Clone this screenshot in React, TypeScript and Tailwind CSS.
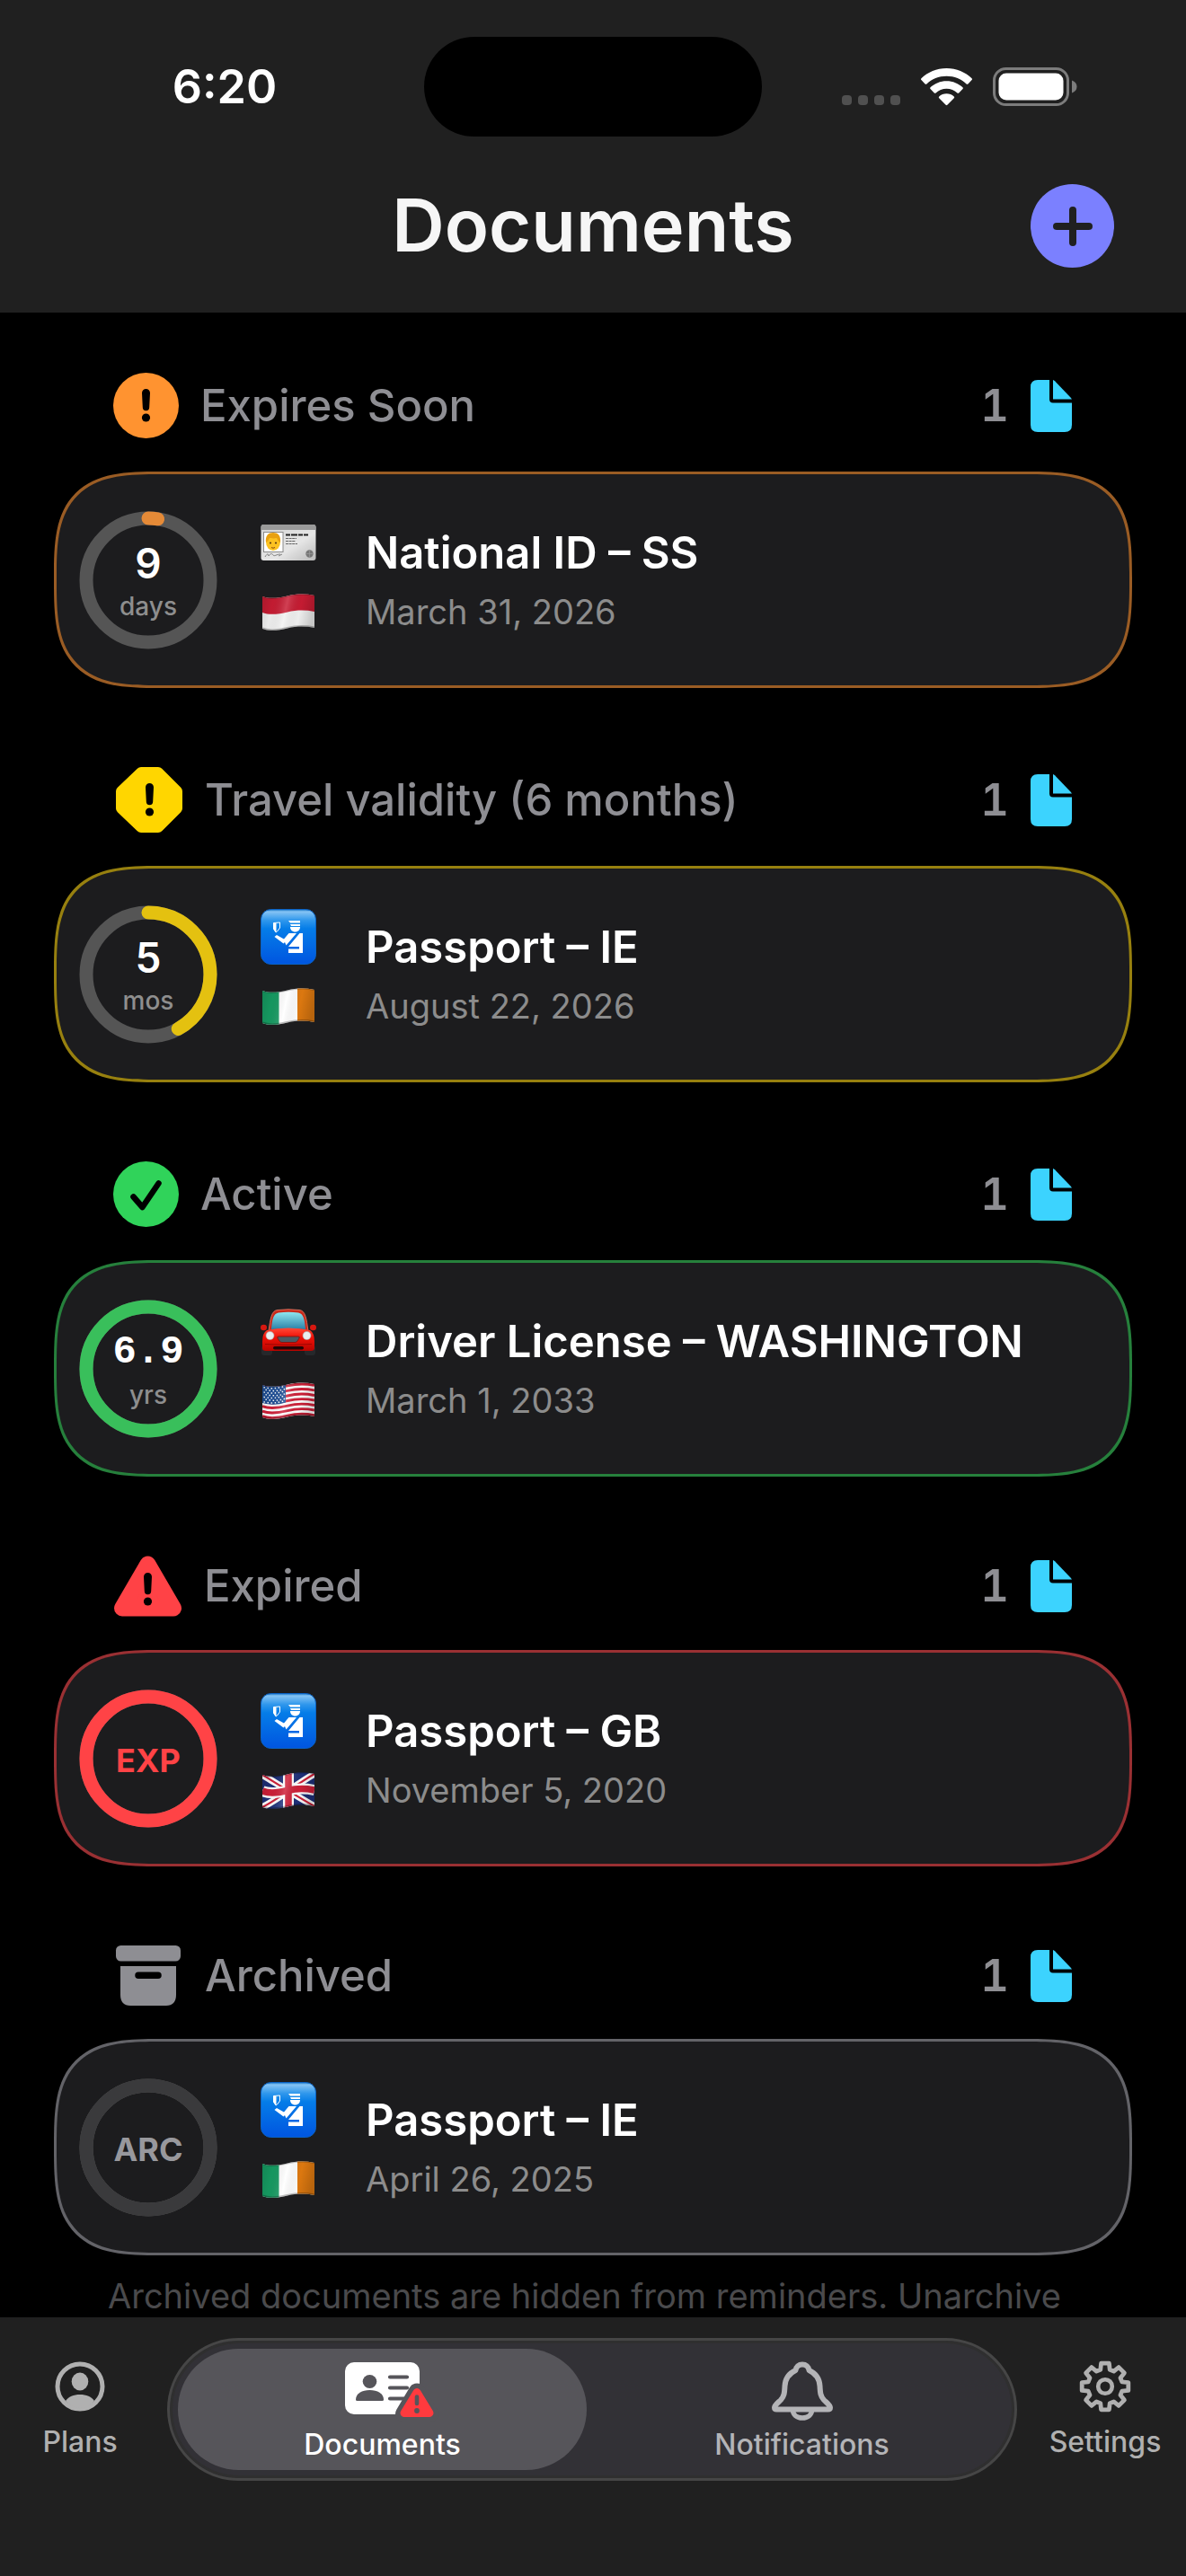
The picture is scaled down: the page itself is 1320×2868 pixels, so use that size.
import { useId, type ReactNode } from "react";

type Tone = "orange" | "yellow" | "green" | "red" | "gray";

type DocumentItem = {
  title: string;
  date: string;
  value: string;
  unit?: string;
  progress: number;
  kind: ReactNode;
  flag: ReactNode;
};

type Section = {
  name: string;
  tone: Tone;
  icon: ReactNode;
  count: number;
  item: DocumentItem;
  note?: string;
};

const borderTone: Record<Tone, string> = {
  orange: "border-[#9a5c24]",
  yellow: "border-[#97800f]",
  green: "border-[#26803c]",
  red: "border-[#9a3033]",
  gray: "border-[#636368]",
};

const arcTone: Record<Tone, string> = {
  orange: "stroke-[#e58a37]",
  yellow: "stroke-[#e4c110]",
  green: "stroke-[#39bf5b]",
  red: "stroke-[#ff4346]",
  gray: "stroke-[#3a3a3c]",
};

const badgeTone: Record<Tone, string> = {
  orange: "text-white",
  yellow: "text-white",
  green: "text-white",
  red: "text-[#ff4346]",
  gray: "text-[#98989d]",
};

/* ---------- Section icons ---------- */

function ExclaimMark({ cx, top, fill = "#000" }: { cx: number; top: number; fill?: string }) {
  return (
    <g fill={fill}>
      <path d={`M${cx - 4.5} ${top + 4.5}a4.5 4.5 0 0 1 9 0l-.8 16a3.7 3.7 0 0 1-7.4 0z`} />
      <circle cx={cx} cy={top + 32} r="4.6" />
    </g>
  );
}

function CircleAlertIcon() {
  return (
    <svg width="73" height="73" viewBox="0 0 73 73" aria-hidden="true">
      <circle cx="36.5" cy="36.5" r="36.5" fill="#ff9330" />
      <ExclaimMark cx={36.5} top={18} />
    </svg>
  );
}

function OctagonAlertIcon() {
  return (
    <svg width="78" height="73" viewBox="0 0 78 73" aria-hidden="true">
      <path
        d="M31 6h19L71 27v19L50 67H31L9 46V27z"
        fill="#ffd600"
        stroke="#ffd600"
        strokeWidth="12"
        strokeLinejoin="round"
      />
      <ExclaimMark cx={40.5} top={18} />
    </svg>
  );
}

function CheckCircleIcon() {
  return (
    <svg width="73" height="73" viewBox="0 0 73 73" aria-hidden="true">
      <circle cx="36.5" cy="36.5" r="36.5" fill="#30d35a" />
      <path
        d="M22.5 39.5L32.5 51 50.5 24.5"
        fill="none"
        stroke="#000"
        strokeWidth="6.5"
        strokeLinecap="round"
        strokeLinejoin="round"
      />
    </svg>
  );
}

function TriangleAlertIcon() {
  return (
    <svg width="77" height="68" viewBox="0 0 77 68" aria-hidden="true">
      <path
        d="M38.5 9.5L67 58.5H10z"
        fill="#ff4246"
        stroke="#ff4246"
        strokeWidth="18"
        strokeLinejoin="round"
      />
      <ExclaimMark cx={38.5} top={19} />
    </svg>
  );
}

function ArchiveIcon() {
  return (
    <svg width="78" height="67" viewBox="0 0 78 67" aria-hidden="true" fill="#8e8e93">
      <rect x="3" y="0" width="72" height="17.5" rx="5.5" />
      <path
        fillRule="evenodd"
        d="M8 23h62v32c0 8-4 12-11 12H19C12 67 8 63 8 55zM28 29.5a3.5 3.5 0 0 0 0 7.5h22a3.5 3.5 0 0 0 0-7.5z"
      />
    </svg>
  );
}

function FileIcon() {
  return (
    <svg width="46" height="58" viewBox="0 0 46 58" aria-hidden="true" fill="#3cd3fe">
      <path d="M8 0h13v21.500q0 4 4 4H46V50q0 8-8 8H8q-8 0-8-8V8q0-8 8-8z" />
      <path d="M25 0q1 .2 2 1.200L44.500 19.500q1.200 1.300 1.500 2H25z" />
    </svg>
  );
}

/* ---------- Document kind pictures ---------- */

function IdCardPicture() {
  const id = useId();
  return (
    <svg width="62" height="62" viewBox="0 0 62 62" aria-hidden="true">
      <defs>
        <linearGradient id={id} x1="0" y1="0" x2="1" y2="1">
          <stop offset="0" stopColor="#d4d4d4" />
          <stop offset="0.6" stopColor="#e6e6e6" />
          <stop offset="1" stopColor="#b9b9b9" />
        </linearGradient>
      </defs>
      <rect x="0.500" y="11" width="61" height="40" rx="3" fill={`url(#${id})`} />
      <path d="M.5 17v-3q0-3 3-3h55q3 0 3 3v3z" fill="#9a9a9a" />
      <rect x="3.500" y="19.500" width="21.500" height="22" fill="#fff" stroke="#8a8a8a" />
      <ellipse cx="14" cy="30.500" rx="8" ry="9.500" fill="#fcc221" />
      <path d="M6 31c-1-8 3-11 8-11s9 3 8 11c-2-1-3-3-4-5-4 1-7 0-8 0-1 2-2 4-4 5z" fill="#e8a010" />
      <circle cx="11" cy="31.500" r="1.100" fill="#5b3b10" />
      <circle cx="17" cy="31.500" r="1.100" fill="#5b3b10" />
      <path d="M12 36.500q2 1.500 4 0" stroke="#8a4a10" fill="none" />
      <path d="M28 22.500h25" stroke="#222" strokeWidth="2" strokeDasharray="5 1 7 1" />
      <path d="M28 26.500h12M28 29.500h11M28 32.500h13" stroke="#666" strokeWidth="1.200" strokeDasharray="3 .6" />
      <path d="M5 47c3-5 4-3 4-1 2-3 4-3 5-1s4-1 8-1M20 46l4-2" stroke="#777" fill="none" strokeWidth="0.900" />
      <circle cx="54.500" cy="43.500" r="4.200" fill="#777" />
      <path d="M50.500 43.500h8M54.500 39.500v8" stroke="#999" strokeWidth="0.700" />
    </svg>
  );
}

function PassportPicture() {
  const id = useId();
  return (
    <svg width="62" height="62" viewBox="0 0 62 62" aria-hidden="true">
      <defs>
        <linearGradient id={id} x1="0" y1="0" x2="0" y2="1">
          <stop offset="0" stopColor="#0d6fc4" />
          <stop offset="0.040" stopColor="#86c4f4" />
          <stop offset="0.200" stopColor="#2f97ec" />
          <stop offset="0.350" stopColor="#057de8" />
          <stop offset="1" stopColor="#0055e0" />
        </linearGradient>
      </defs>
      <rect x="0.500" y="0.500" width="61" height="61" rx="11" fill={`url(#${id})`} stroke="#0a62c4" />
      <g fill="#fff">
        <path d="M31 13h13v2.500H33zM33 17h11v2H34z" />
        <path d="M33 20h11c0 3-2 5.500-5.500 5.500S33 23 33 20z" />
        <path d="M14.500 15.500l3 .5v10l-3-3z" />
        <path d="M14.500 15.500l7-.5v6l-3 4-1.500 1-2.500-4z" fill="none" stroke="#fff" strokeWidth="1" />
        <path d="M18 29l8 4.500 5.500-6.500H40L28.500 40.500 27 37l-1.500 1.500L15.500 31z" />
        <path d="M43.500 27H47v22H31v-4.500h12V42H31z" />
      </g>
    </svg>
  );
}

function CarPicture() {
  const id = useId();
  return (
    <svg width="62" height="62" viewBox="0 0 62 62" aria-hidden="true">
      <defs>
        <linearGradient id={`${id}g`} x1="0" y1="0" x2="0" y2="1">
          <stop offset="0" stopColor="#8ee6f0" />
          <stop offset="1" stopColor="#2a82a8" />
        </linearGradient>
        <linearGradient id={`${id}b`} x1="0" y1="0" x2="0" y2="1">
          <stop offset="0" stopColor="#ff4a38" />
          <stop offset="0.400" stopColor="#f01208" />
          <stop offset="1" stopColor="#b80400" />
        </linearGradient>
      </defs>
      <rect x="1" y="47" width="12" height="11" rx="3" fill="#26282b" />
      <rect x="49" y="47" width="12" height="11" rx="3" fill="#26282b" />
      <ellipse cx="3.500" cy="27" rx="3.500" ry="3.200" fill="#d81810" />
      <ellipse cx="58.500" cy="27" rx="3.500" ry="3.200" fill="#d81810" />
      <path d="M9 31C11 17 12 8 19 7.500q12-1.500 24 0C50 8 51 17 53 31z" fill="#c92a1c" stroke="#e8806a" strokeWidth="0.800" />
      <path d="M12 29C13 18 14 11.500 20 10.500q11-1.500 22 0C48 11.500 49 18 50 29q-19-2-38 0z" fill={`url(#${id}g)`} />
      <path d="M7 30q24-5 48 0 5 3 5 13v7q0 3-4 3H6q-4 0-4-3v-7Q2 33 7 30z" fill={`url(#${id}b)`} />
      <circle cx="10.500" cy="36" r="4.500" fill="#e9eef0" stroke="#aaa" strokeWidth="0.600" />
      <circle cx="51.500" cy="36" r="4.500" fill="#e9eef0" stroke="#aaa" strokeWidth="0.600" />
      <path d="M20 37h22q2 0 1 2l-2 3q-1 1.500-3 1.500H24q-2 0-3-1.500l-2-3q-1-2 1-2z" fill="#4a5a63" stroke="#8a1410" />
      <rect x="14" y="48" width="34" height="3.500" rx="1.700" fill="#230505" />
      <path d="M5 45.500q26 2 52 0" stroke="#8e0602" strokeWidth="0.800" fill="none" />
    </svg>
  );
}

/* ---------- Flags ---------- */

const wave = (y: number) => `M2 ${y + 3}C9 ${y + 6} 20 ${y + 5} 30 ${y + 2.5}S50 ${y} 60 ${y + 2}`;
const waveBack = (y: number) => `L60 ${y + 2}C50 ${y} 40 ${y} 30 ${y + 2.5}S9 ${y + 6} 2 ${y + 3}Z`;

function Flag({ children }: { children: ReactNode }) {
  const id = useId();
  return (
    <svg width="62" height="62" viewBox="0 -10 62 62" aria-hidden="true">
      <defs>
        <clipPath id={`${id}c`}>
          <path d={wave(0) + waveBack(36)} />
        </clipPath>
        <linearGradient id={`${id}s`} x1="0" y1="0" x2="1" y2="0.150">
          <stop offset="0" stopColor="#000" stopOpacity="0.160" />
          <stop offset="0.250" stopColor="#000" stopOpacity="0.030" />
          <stop offset="0.500" stopColor="#fff" stopOpacity="0.160" />
          <stop offset="0.750" stopColor="#000" stopOpacity="0.020" />
          <stop offset="1" stopColor="#000" stopOpacity="0.180" />
        </linearGradient>
      </defs>
      <g clipPath={`url(#${id}c)`}>
        {children}
        <rect width="62" height="44" fill={`url(#${id}s)`} />
        <path d={wave(0)} fill="none" stroke="#000" strokeOpacity="0.200" strokeWidth="2" />
        <path d={wave(36)} fill="none" stroke="#000" strokeOpacity="0.250" strokeWidth="3" />
      </g>
    </svg>
  );
}

function IndonesiaFlag() {
  return (
    <Flag>
      <rect width="62" height="44" fill="#f2f2f2" />
      <path d={wave(-4) + waveBack(18)} fill="#c81c33" />
    </Flag>
  );
}

function IrelandFlag() {
  return (
    <Flag>
      <rect width="62" height="44" fill="#fff" />
      <rect width="20.500" height="44" fill="#169b62" />
      <rect x="41" width="21" height="44" fill="#e07a10" />
    </Flag>
  );
}

function UsaFlag() {
  const stripes = [0, 2, 4, 6, 8, 10, 12];
  const dots = [0, 1, 2, 3, 4, 5, 6];
  return (
    <Flag>
      <rect width="62" height="44" fill="#fff" />
      {stripes.map((n) => (
        <path key={n} d={wave(n * 2.77 + 1.4)} fill="none" stroke="#cf1f38" strokeWidth="2.900" />
      ))}
      <path d="M0 0H28V22.500Q14 27 0 22.500z" fill="#1f4f96" />
      {dots.map((n) => (
        <path
          key={n}
          d={`M${n % 2 ? 5.5 : 3.5} ${5.5 + n * 2.7}q11 3 24-1.500`}
          fill="none"
          stroke="#fff"
          strokeWidth="1.500"
          strokeDasharray="1.500 2.600"
        />
      ))}
    </Flag>
  );
}

function UkFlag() {
  return (
    <Flag>
      <rect width="62" height="44" fill="#1d2f78" />
      <path d="M2 3C20 14 42 28 60 38M2 39C20 30 42 12 60 2" stroke="#fff" strokeWidth="7.500" fill="none" />
      <path d="M2 3C20 14 42 28 60 38M2 39C20 30 42 12 60 2" stroke="#cf1f38" strokeWidth="2.200" fill="none" />
      <path d="M31 0V44" stroke="#fff" strokeWidth="12" />
      <path d={wave(18)} stroke="#fff" strokeWidth="12" fill="none" />
      <path d="M31 0V44" stroke="#cf1f38" strokeWidth="7.500" />
      <path d={wave(18)} stroke="#cf1f38" strokeWidth="7.500" fill="none" />
    </Flag>
  );
}

/* ---------- Status bar ---------- */

function StatusBar() {
  return (
    <div className="grid grid-cols-[1fr_376px_1fr] items-center">
      <time className="pl-7 text-center text-[52px] leading-[60px] font-semibold text-white">6:20</time>
      <div className="h-[111px] rounded-full bg-black" />
      <div className="flex items-center justify-end gap-[23px] pr-[121px]">
        <div className="flex gap-[7px] pt-[30px]">
          <span className="size-[11px] rounded-[4px] bg-[#505050]" />
          <span className="size-[11px] rounded-[4px] bg-[#505050]" />
          <span className="size-[11px] rounded-[4px] bg-[#505050]" />
          <span className="size-[11px] rounded-[4px] bg-[#505050]" />
        </div>
        <svg width="57" height="42" viewBox="0 0 57 42" aria-label="Wi-Fi" role="img" fill="#fff">
          <path d="M28.500 0C17.500 0 7.500 4.300.4 11.300q-.8.900 0 1.800l4.200 4.300q.9.900 1.800 0C12 12 19.800 8.700 28.500 8.700S45 12 50.600 17.400q.9.900 1.800 0l4.200-4.300q.8-.9 0-1.800C49.500 4.300 39.500 0 28.500 0z" />
          <path d="M28.500 14.200c-7 0-13.300 2.700-18 7.100q-.9.900 0 1.800l4.300 4.300q.9.900 1.800 0c3.100-2.900 7.300-4.600 11.900-4.600s8.800 1.700 11.900 4.600q.9.900 1.800 0l4.300-4.300q.9-.9 0-1.800c-4.700-4.400-11-7.100-18-7.100z" />
          <path d="M28.500 28.200c-3.200 0-6.100 1.200-8.300 3.200q-.9.900 0 1.800l7.400 7.600q.9.900 1.800 0l7.400-7.600q.9-.9 0-1.800c-2.200-2-5.100-3.200-8.300-3.200z" />
        </svg>
        <svg width="94" height="43" viewBox="0 0 94 43" aria-label="Battery" role="img">
          <rect x="1.500" y="1.500" width="82" height="40" rx="13" fill="none" stroke="#7c7c7c" strokeWidth="3" />
          <rect x="6.500" y="6.500" width="72" height="30" rx="8.500" fill="#fff" />
          <path d="M88 14.500q5.500 2 5.500 7t-5.500 7z" fill="#7c7c7c" />
        </svg>
      </div>
    </div>
  );
}

/* ---------- Document list ---------- */

function ProgressRing({ item, tone }: { item: DocumentItem; tone: Tone }) {
  const radius = 69;
  const length = 2 * Math.PI * radius;
  const valueFont =
    item.value.length > 1
      ? "font-['Liberation_Mono',monospace] text-[44px] font-bold"
      : "text-[46px] font-semibold";
  return (
    <div className="grid size-[154px] shrink-0 place-items-center">
      <svg width="154" height="154" viewBox="0 0 154 154" className="col-start-1 row-start-1" aria-hidden="true">
        <circle cx="77" cy="77" r={radius} fill="none" strokeWidth="15" className="stroke-[#555555]" />
        <circle
          cx="77"
          cy="77"
          r={radius}
          fill="none"
          strokeWidth="15"
          strokeLinecap={item.progress < 1 ? "round" : "butt"}
          strokeDasharray={item.progress < 1 ? `${length * item.progress} ${length}` : undefined}
          transform="rotate(-90 77 77)"
          className={arcTone[tone]}
        />
      </svg>
      <div className={`col-start-1 row-start-1 flex flex-col items-center gap-[6px] pt-1 ${badgeTone[tone]}`}>
        {item.unit ? (
          <>
            <span className={`leading-[48px] ${valueFont}`}>{item.value}</span>
            <span className="text-[28px] leading-9 font-medium text-[#8e8e8e]">{item.unit}</span>
          </>
        ) : (
          <span className="text-[36px] leading-[48px] font-bold">{item.value}</span>
        )}
      </div>
    </div>
  );
}

function DocumentCard({ item, tone }: { item: DocumentItem; tone: Tone }) {
  return (
    <button
      type="button"
      className={`mx-[60px] flex h-[241px] items-center rounded-[96px] border-3 bg-[#1c1c1e] pr-8 pl-[25px] text-left supports-[corner-shape:squircle]:rounded-[118px] supports-[corner-shape:squircle]:[corner-shape:superellipse(1.6)] ${borderTone[tone]}`}
    >
      <ProgressRing item={item} tone={tone} />
      <span className="ml-12 flex shrink-0 flex-col gap-4 pb-[5px]">
        {item.kind}
        {item.flag}
      </span>
      <span className="ml-[55px] flex min-w-0 flex-col gap-[11px]">
        <span className="text-[49px] leading-[60px] font-semibold whitespace-nowrap text-white">{item.title}</span>
        <span className="text-[38px] leading-[48px] text-[#8c8c8c]">{item.date}</span>
      </span>
    </button>
  );
}

function DocumentSection({ section }: { section: Section }) {
  return (
    <section className="flex flex-col gap-[37px]">
      <div className="flex items-center pr-[127px] pl-[126px]">
        {section.icon}
        <h2 className="ml-6 flex-1 text-[49px] leading-[60px] font-medium text-[#8e8e93]">{section.name}</h2>
        <span className="mr-6 text-[49px] leading-[60px] font-semibold text-[#8e8e93] tabular-nums">{section.count}</span>
        <FileIcon />
      </div>
      <div className="flex flex-col">
        <DocumentCard item={section.item} tone={section.tone} />
        {section.note && (
          <p className="pt-[22px] pr-20 pl-[120px] text-[38px] leading-[46px] text-[#4a4a4c]">{section.note}</p>
        )}
      </div>
    </section>
  );
}

const sections: Section[] = [
  {
    name: "Expires Soon",
    tone: "orange",
    icon: <CircleAlertIcon />,
    count: 1,
    item: {
      title: "National ID – SS",
      date: "March 31, 2026",
      value: "9",
      unit: "days",
      progress: 9 / 365,
      kind: <IdCardPicture />,
      flag: <IndonesiaFlag />,
    },
  },
  {
    name: "Travel validity (6 months)",
    tone: "yellow",
    icon: <OctagonAlertIcon />,
    count: 1,
    item: {
      title: "Passport – IE",
      date: "August 22, 2026",
      value: "5",
      unit: "mos",
      progress: 153 / 365,
      kind: <PassportPicture />,
      flag: <IrelandFlag />,
    },
  },
  {
    name: "Active",
    tone: "green",
    icon: <CheckCircleIcon />,
    count: 1,
    item: {
      title: "Driver License – WASHINGTON",
      date: "March 1, 2033",
      value: "6.9",
      unit: "yrs",
      progress: 1,
      kind: <CarPicture />,
      flag: <UsaFlag />,
    },
  },
  {
    name: "Expired",
    tone: "red",
    icon: <TriangleAlertIcon />,
    count: 1,
    item: {
      title: "Passport – GB",
      date: "November 5, 2020",
      value: "EXP",
      progress: 1,
      kind: <PassportPicture />,
      flag: <UkFlag />,
    },
  },
  {
    name: "Archived",
    tone: "gray",
    icon: <ArchiveIcon />,
    count: 1,
    item: {
      title: "Passport – IE",
      date: "April 26, 2025",
      value: "ARC",
      progress: 1,
      kind: <PassportPicture />,
      flag: <IrelandFlag />,
    },
    note: "Archived documents are hidden from reminders. Unarchive",
  },
];

/* ---------- Tab bar ---------- */

function PersonIcon() {
  return (
    <svg width="56" height="56" viewBox="0 0 56 56" aria-hidden="true">
      <circle cx="28" cy="28" r="25" fill="none" stroke="#b0b0b0" strokeWidth="5" />
      <ellipse cx="28" cy="22.500" rx="9.300" ry="10" fill="#b0b0b0" />
      <path d="M12 44c3-4.500 9-7 16-7s13 2.500 16 7c-4 5-10 8-16 8s-12-3-16-8z" fill="#b0b0b0" />
    </svg>
  );
}

function IdTabIcon() {
  return (
    <svg width="84" height="66" viewBox="0 0 84 66" className="overflow-visible" aria-hidden="true">
      <rect x="0" y="1" width="83" height="58" rx="10" fill="#fff" />
      <g fill="#56555a">
        <ellipse cx="27.500" cy="22.500" rx="7.800" ry="7.500" />
        <path d="M12 42.500C12 36 19 32 27.500 32S43 36 43 42.500q0 1.500-1.500 1.500h-28Q12 44 12 42.500z" />
      </g>
      <path d="M50 17.500H69M50 29.500H69M50 41.500H69" stroke="#56555a" strokeWidth="4.200" strokeLinecap="round" />
      <path d="M80 34L94.500 58.500H65.500z" fill="#56555a" stroke="#56555a" strokeWidth="19" strokeLinejoin="round" />
      <path d="M80 34.500L94 57.500H66z" fill="#ff3a3e" stroke="#ff3a3e" strokeWidth="9" strokeLinejoin="round" />
      <path d="M80 39.500V47" stroke="#56555a" strokeWidth="4.600" strokeLinecap="round" />
      <circle cx="80" cy="55" r="2.900" fill="#56555a" />
    </svg>
  );
}

function BellTabIcon() {
  return (
    <svg width="68" height="66" viewBox="0 0 68 66" aria-hidden="true" fill="none" stroke="#b4b4b7" strokeLinejoin="round">
      <path
        d="M34 3.500c-4 0-7 2.500-7.500 6.500-7.500 3.500-11.500 9-12 17.500-.4 8-.8 11.500-4.500 15.500-3.500 3.500-7 6-7 8.500 0 1.500 1 2 2.500 2h57c1.500 0 2.500-.5 2.500-2 0-2.500-3.500-5-7-8.500-3.700-4-4.100-7.500-4.500-15.500-.5-8.500-4.500-14-12-17.500-.5-4-3.500-6.500-7.500-6.500z"
        strokeWidth="6"
      />
      <path d="M23.500 54c0 5.500 4.500 9 10.500 9s10.500-3.500 10.500-9" strokeWidth="5.500" />
    </svg>
  );
}

function GearIcon() {
  const teeth = 8;
  const points: string[] = [];
  for (let i = 0; i < teeth; i++) {
    const base = (i * 2 * Math.PI) / teeth - Math.PI / 2;
    const corners: [number, number][] = [
      [-0.27, 19.5],
      [-0.17, 26.2],
      [0.17, 26.2],
      [0.27, 19.5],
    ];
    for (const [offset, r] of corners) {
      points.push(`${(30 + r * Math.cos(base + offset)).toFixed(2)},${(30 + r * Math.sin(base + offset)).toFixed(2)}`);
    }
  }
  return (
    <svg width="60" height="60" viewBox="0 0 60 60" aria-hidden="true" fill="none" stroke="#b0b0b0" strokeLinejoin="round">
      <polygon points={points.join(" ")} strokeWidth="4.800" />
      <circle cx="30" cy="30" r="7.800" strokeWidth="4.600" />
    </svg>
  );
}

function TabBar() {
  return (
    <nav className="grid h-[288px] shrink-0 grid-cols-[178px_1fr_180px] items-start gap-2 bg-[#202020] pt-[23px]">
      <button type="button" className="flex flex-col items-center gap-[14px] pt-[26px] text-[32px] leading-10 font-medium text-[#b0b0b0]">
        <PersonIcon />
        Plans
      </button>
      <div className="grid grid-cols-2 gap-3 rounded-[80px] border-3 border-[#464646] bg-[#323136] p-[9px] shadow-[inset_0_0_0_3px_#2f2f2f]">
        <button
          type="button"
          aria-current="page"
          className="flex h-[135px] flex-col items-center gap-[7px] rounded-[68px] bg-[#56555a] pt-[14px] text-[32px] leading-10 font-medium text-white"
        >
          <IdTabIcon />
          Documents
        </button>
        <button
          type="button"
          className="flex h-[135px] flex-col items-center gap-[7px] rounded-[68px] pt-[14px] text-[32px] leading-10 font-medium text-[#b4b4b7]"
        >
          <BellTabIcon />
          Notifications
        </button>
      </div>
      <button type="button" className="flex flex-col items-center gap-3 pt-6 text-[32px] leading-10 font-medium text-[#b0b0b0]">
        <GearIcon />
        Settings
      </button>
    </nav>
  );
}

export default function App() {
  return (
    <div className="flex h-screen flex-col bg-black font-['Inter','Liberation_Sans',sans-serif] antialiased">
      <header className="shrink-0 bg-[#202020] pt-[41px] pb-[50px]">
        <StatusBar />
        <div className="mt-[53px] grid grid-cols-[1fr_auto_1fr] items-center px-20">
          <h1 className="col-start-2 text-[81px] leading-[93px] font-semibold text-[#f6f6f6]">Documents</h1>
          <button
            type="button"
            aria-label="Add document"
            className="grid size-[93px] place-items-center justify-self-end rounded-full bg-[#7b80ff]"
          >
            <svg width="44" height="44" viewBox="0 0 44 44" aria-hidden="true">
              <path d="M22 4V40M4 22H40" stroke="#202020" strokeWidth="8" strokeLinecap="round" />
            </svg>
          </button>
        </div>
      </header>
      <main className="flex min-h-0 flex-1 flex-col gap-[88px] overflow-y-auto pt-[67px] [scrollbar-width:none]">
        {sections.map((section) => (
          <DocumentSection key={section.name} section={section} />
        ))}
      </main>
      <TabBar />
    </div>
  );
}
